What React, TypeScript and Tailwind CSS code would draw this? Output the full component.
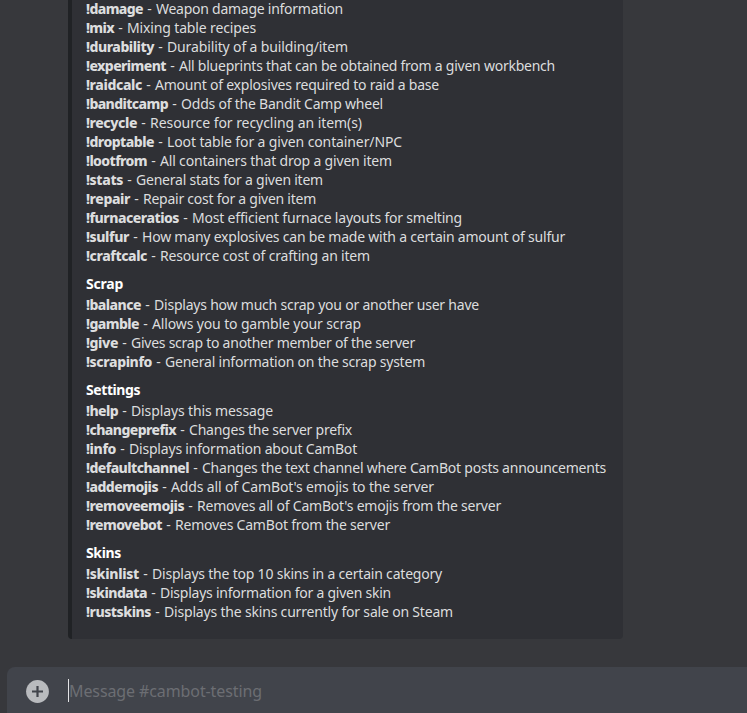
import { useLayoutEffect, useRef } from "react";

type Command = { name: string; nameEnd: number; text: string; textEnd: number };
type Section = { title?: string; titleWidth?: number; commands: Command[] };

const TEXT_LEFT = 86;
const DASH_WIDTH = 13;

const c = (name: string, nameEnd: number, text: string, textEnd: number): Command => ({
  name,
  nameEnd,
  text,
  textEnd,
});

const sections: Section[] = [
  {
    commands: [
      c("!damage", 143, "Weapon damage information", 343),
      c("!mix", 114, "Mixing table recipes", 256),
      c("!durability", 154, "Durability of a building/item", 348),
      c("!experiment", 166, "All blueprints that can be obtained from a given workbench", 555),
      c("!raidcalc", 142, "Amount of explosives required to raid a base", 439),
      c("!banditcamp", 168, "Odds of the Bandit Camp wheel", 383),
      c("!recycle", 137, "Resource for recycling an item(s)", 362),
      c("!droptable", 154, "Loot table for a given container/NPC", 402),
      c("!lootfrom", 147, "All containers that drop a given item", 392),
      c("!stats", 123, "General stats for a given item", 323),
      c("!repair", 130, "Repair cost for a given item", 316),
      c("!furnaceratios", 179, "Most efficient furnace layouts for smelting", 462),
      c("!sulfur", 129, "How many explosives can be made with a certain amount of sulfur", 565),
      c("!craftcalc", 147, "Resource cost of crafting an item", 370),
    ],
  },
  {
    title: "Scrap",
    titleWidth: 37,
    commands: [
      c("!balance", 141, "Displays how much scrap you or another user have", 479),
      c("!gamble", 139, "Allows you to gamble your scrap", 361),
      c("!give", 118, "Gives scrap to another member of the server", 415),
      c("!scrapinfo", 152, "General information on the scrap system", 425),
    ],
  },
  {
    title: "Settings",
    titleWidth: 54,
    commands: [
      c("!help", 118, "Displays this message", 273),
      c("!changeprefix", 176, "Changes the server prefix", 352),
      c("!info", 116, "Displays information about CamBot", 357),
      c("!defaultchannel", 189, "Changes the text channel where CamBot posts announcements", 606),
      c("!addemojis", 158, "Adds all of CamBot's emojis to the server", 434),
      c("!removeemojis", 184, "Removes all of CamBot's emojis from the server", 501),
      c("!removebot", 162, "Removes CamBot from the server", 390),
    ],
  },
  {
    title: "Skins",
    titleWidth: 35,
    commands: [
      c("!skinlist", 139, "Displays the top 10 skins in a certain category", 442),
      c("!skindata", 147, "Displays information for a given skin", 391),
      c("!rustskins", 151, "Displays the skins currently for sale on Steam", 453),
    ],
  },
];

// Tracks a run of text so that it fills the given width.
function Run({ text, width, className = "" }: { text: string; width: number; className?: string }) {
  const ref = useRef<HTMLSpanElement>(null);
  useLayoutEffect(() => {
    const el = ref.current;
    if (!el) return;
    el.style.letterSpacing = "0px";
    const natural = el.getBoundingClientRect().width;
    el.style.letterSpacing = `${(width - natural) / text.length}px`;
  }, [text, width]);
  return (
    <span ref={ref} className={`inline-block whitespace-pre ${className}`}>
      {text}
    </span>
  );
}

function Row({ command }: { command: Command }) {
  return (
    <div className="flex h-[19px] items-center whitespace-pre leading-[19px]">
      <Run text={command.name} width={command.nameEnd - TEXT_LEFT} className="font-extrabold" />
      <span className="w-[13px] text-center">-</span>
      <Run text={command.text} width={command.textEnd - command.nameEnd - DASH_WIDTH} />
    </div>
  );
}

export default function App() {
  return (
    <div className="flex h-[713px] w-[747px] flex-col overflow-hidden bg-[#37383c] font-['Noto_Sans',sans-serif] text-[14px] text-[#dcddde]">
      <div className="ml-[68px] flex h-[639px] w-[555px] shrink-0 flex-col gap-[9px] rounded-b-[4px] border-l-4 border-[#202225] bg-[#2f3035] pl-[14px]">
        {sections.map((section, i) => (
          <section key={i} className="first:-mt-px">
            {section.title && (
              <h2 className="flex h-[21px] items-center pb-px leading-5 text-white">
                <Run text={section.title} width={section.titleWidth ?? 0} className="font-bold" />
              </h2>
            )}
            {section.commands.map((command) => (
              <Row key={command.name} command={command} />
            ))}
          </section>
        ))}
      </div>
      <div className="ml-[7px] mt-7 flex h-[60px] shrink-0 items-start rounded-tl-lg bg-[#41444b] pl-[19px] pt-[13px]">
        <svg width="23" height="23" viewBox="0 0 23 23" className="shrink-0">
          <circle cx="11.5" cy="11.5" r="11.4" fill="#b9bbbe" />
          <path d="M11.5 6v11M6 11.5h11" stroke="#41444b" strokeWidth="2.2" />
        </svg>
        <div className="ml-[19px] mt-[-1px] h-[23px] w-px bg-[#e3e4e6]" />
        <div className="text-[16px] leading-[22px] text-[#6c6e73]">
          <Run text="Message #cambot-testing" width={193} />
        </div>
      </div>
    </div>
  );
}
